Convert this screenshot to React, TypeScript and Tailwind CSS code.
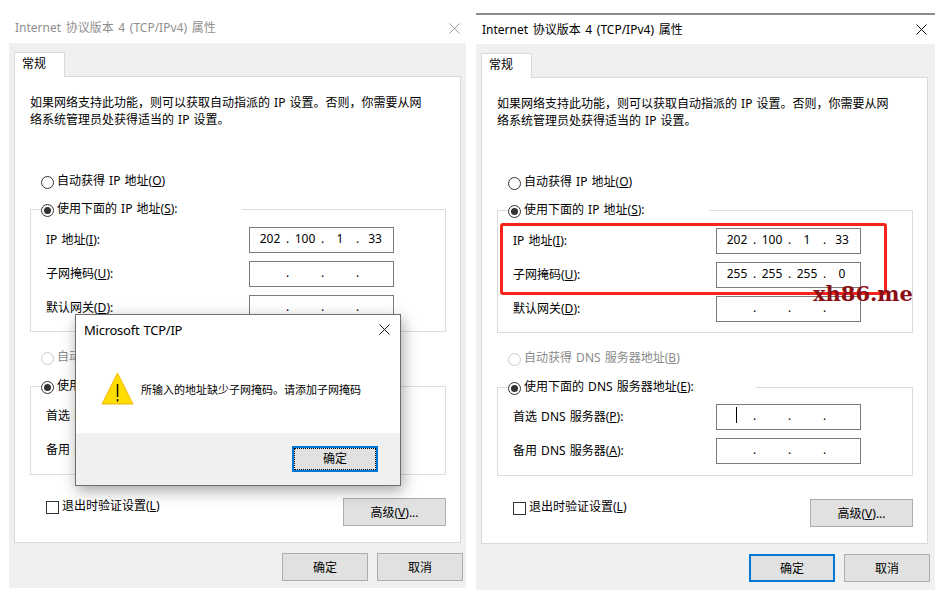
import type { ReactNode } from 'react';

function CloseIcon({ color }: { color: string }) {
  return (
    <svg width="11" height="11" viewBox="0 0 11 11" fill="none" stroke={color} strokeWidth="1">
      <path d="M0.5 0.5L10.5 10.5M10.5 0.5L0.5 10.5" />
    </svg>
  );
}

function Radio({ checked, disabled }: { checked?: boolean; disabled?: boolean }) {
  return (
    <span
      className={`flex h-[13px] w-[13px] shrink-0 items-center justify-center rounded-full border bg-white ${
        disabled ? 'border-[#cccccc]' : 'border-[#333333]'
      }`}
    >
      {checked && <span className="h-[7px] w-[7px] rounded-full bg-[#333333]" />}
    </span>
  );
}

function Btn({ children, primary }: { children: ReactNode; primary?: boolean }) {
  return (
    <div
      className={`flex h-[28px] w-[86px] items-center justify-center bg-[#e1e1e1] pt-[2px] ${
        primary ? 'border-2 border-[#0078d7]' : 'border border-[#adadad]'
      }`}
    >
      {children}
    </div>
  );
}

function IpField({ label, value, caret }: { label: ReactNode; value?: string[]; caret?: boolean }) {
  const octets = value ?? ['', '', '', ''];
  return (
    <div className="flex h-[26px] items-center">
      <span className="w-[203px]">{label}</span>
      <div className="relative flex h-[26px] w-[145px] items-center border border-[#7a7a7a] bg-white pb-[2px] pl-[6px]">
        {octets.map((o, i) => (
          <div key={i} className="flex">
            <span className="w-[28px] text-center">{o}</span>
            {i < 3 && <span className="w-[7px] text-center">.</span>}
          </div>
        ))}
        {caret && <span className="absolute left-[19px] top-[2px] h-[16px] w-px bg-black" />}
      </div>
    </div>
  );
}

function Group({
  legend,
  legendWidth,
  className,
  fieldsClass,
  children,
}: {
  legend: ReactNode;
  legendWidth: string;
  className: string;
  fieldsClass: string;
  children: ReactNode;
}) {
  return (
    <div className={`border border-[#dcdcdc] ${className}`}>
      <div className={`ml-[10px] -mt-[7px] flex h-[14px] items-center gap-[3px] bg-white ${legendWidth}`}>
        <Radio checked />
        <span className="-mt-[3px]">{legend}</span>
      </div>
      <div className={`flex flex-col gap-[8px] pl-[15px] ${fieldsClass}`}>{children}</div>
    </div>
  );
}

function Window({
  width,
  pr,
  dim,
  right,
  subnet,
  children,
}: {
  width: string;
  pr: string;
  dim?: boolean;
  right?: boolean;
  subnet?: string[];
  children?: ReactNode;
}) {
  return (
    <div className={`relative mt-[13px] shrink-0 ${width}`}>
      {/* Title bar */}
      <div
        className={`flex items-center justify-between pl-[6px] ${
          right ? 'h-[31px] border-t-2 border-[#8c8c8c] pr-[8px]' : 'h-[30px] pr-[6px]'
        }`}
      >
        <span className={`[word-spacing:1.5px] ${dim ? 'text-[#8f8f8f]' : 'text-black'}`}>
          Internet 协议版本 4 (TCP/IPv4) 属性
        </span>
        <CloseIcon color={dim ? '#9a9a9a' : '#111111'} />
      </div>

      <div className={`bg-[#f0f0f0] pl-[5px] pt-[9px] ${right ? 'pb-[8px]' : 'pb-[7px]'}`}>
        {/* Tab */}
        <div className="relative z-10 -mb-px flex h-[25px] w-[51px] items-center border border-b-0 border-[#d9d9d9] bg-white pb-[2px] pl-[7px]">
          常规
        </div>

        {/* Tab panel */}
        <div className="w-[447px] border border-[#d9d9d9] bg-white pb-[16px] pl-[15px] pr-[14px] pt-[17px]">
          <p className="leading-[17px]">
            如果网络支持此功能，则可以获取自动指派的 IP 设置。否则，你需要从网
            <br />
            络系统管理员处获得适当的 IP 设置。
          </p>

          <div className="ml-[11px] mt-[46px] flex h-[16px] items-center gap-[3px]">
            <Radio />
            <span className="-mt-[3px]">
              自动获得 IP 地址(<u>O</u>)
            </span>
          </div>

          <Group
            legend={<>使用下面的 IP 地址(<u>S</u>):</>}
            legendWidth="w-[201px]"
            className="mt-[19px]"
            fieldsClass="mt-[10px] pb-[10px]"
          >
            <IpField label={<>IP 地址(<u>I</u>):</>} value={['202', '100', '1', '33']} />
            <IpField label={<>子网掩码(<u>U</u>):</>} value={subnet} />
            <IpField label={<>默认网关(<u>D</u>):</>} />
          </Group>

          <div className="ml-[11px] mt-[18px] flex h-[16px] items-center gap-[3px] text-[#8a8a8a]">
            <Radio disabled />
            <span className="-mt-[3px]">
              自动获得 DNS 服务器地址(<u>B</u>)
            </span>
          </div>

          <Group
            legend={<>使用下面的 DNS 服务器地址(<u>E</u>):</>}
            legendWidth="w-[248px]"
            className="mt-[20px]"
            fieldsClass="mt-[9px] pb-[11px]"
          >
            <IpField label={<>首选 DNS 服务器(<u>P</u>):</>} caret={right} />
            <IpField label={<>备用 DNS 服务器(<u>A</u>):</>} />
          </Group>

          <div className="mt-[23px] flex items-start justify-between">
            <div className="ml-[16px] mt-[2px] flex items-center gap-[3px]">
              <span className="h-[13px] w-[13px] border border-[#333333] bg-white" />
              <span className="-mt-[2px]">
                退出时验证设置(<u>L</u>)
              </span>
            </div>
            <div className="flex h-[28px] w-[103px] items-center justify-center border border-[#adadad] bg-[#e1e1e1] pt-px">
              <span>
                高级(<u>V</u>)...
              </span>
            </div>
          </div>
        </div>

        {/* Bottom buttons */}
        <div className={`mt-[10px] flex justify-end gap-[9px] ${pr}`}>
          <Btn primary={right}>确定</Btn>
          <Btn>取消</Btn>
        </div>
      </div>
      {children}
    </div>
  );
}

function WarningIcon() {
  return (
    <svg width="33" height="33" viewBox="0 0 33 33" className="shrink-0">
      <path d="M16.5 1L32 32H1Z" fill="#ffdd00" stroke="#f2b90c" strokeWidth="1" strokeLinejoin="round" />
      <path d="M15.8 12h1.5v13h-1.5zM15.8 27h1.5v2.5h-1.5z" fill="#111111" />
    </svg>
  );
}

function AlertDialog() {
  return (
    <div className="absolute left-[66px] top-[301px] z-20 flex h-[172px] w-[326px] flex-col border border-[#6e6e6e] bg-white shadow-[2px_5px_14px_rgba(0,0,0,0.35)]">
      <div className="flex h-[29px] items-center justify-between pl-[8px] pr-[10px]">
        <span className="text-[13px] tracking-[-0.25px]">Microsoft TCP/IP</span>
        <CloseIcon color="#111111" />
      </div>
      <div className="flex h-[89px] items-center gap-[7px] pb-[1px] pl-[25px]">
        <WarningIcon />
        <span className="mt-[3px] text-[11px]">所输入的地址缺少子网掩码。请添加子网掩码</span>
      </div>
      <div className="flex flex-1 items-start justify-end bg-[#f0f0f0] pr-[22px] pt-[13px]">
        <div className="h-[26px] w-[86px]">
          <div className="flex h-full w-full items-center justify-center border-2 border-[#0078d7] bg-[#e1e1e1]">
            <span className="flex h-full w-full items-center justify-center border border-dotted border-black">确定</span>
          </div>
        </div>
      </div>
    </div>
  );
}

export default function App() {
  return (
    <div className="flex h-[602px] w-[941px] gap-[10px] overflow-hidden bg-white pl-[9px] font-['Noto_Sans','Noto_Sans_CJK_SC',sans-serif] text-[12px] leading-[16px] text-black [word-spacing:1px]">
      <Window width="w-[457px]" pr="pr-[3px]" dim>
        <AlertDialog />
      </Window>
      <Window width="w-[459px]" pr="pr-[5px]" right subnet={['255', '255', '255', '0']}>
        {/* Red highlight and watermark drawn over the screenshot */}
        <div className="absolute left-[24px] top-[210px] h-[72px] w-[387px] rounded-[3px] border-[3px] border-[#f5251c]" />
        <span className="absolute left-[337px] top-[268px] font-['DejaVu_Serif',serif] text-[21px] font-bold leading-[26px] text-[#8a0d14]">
          xh86.me
        </span>
      </Window>
    </div>
  );
}
